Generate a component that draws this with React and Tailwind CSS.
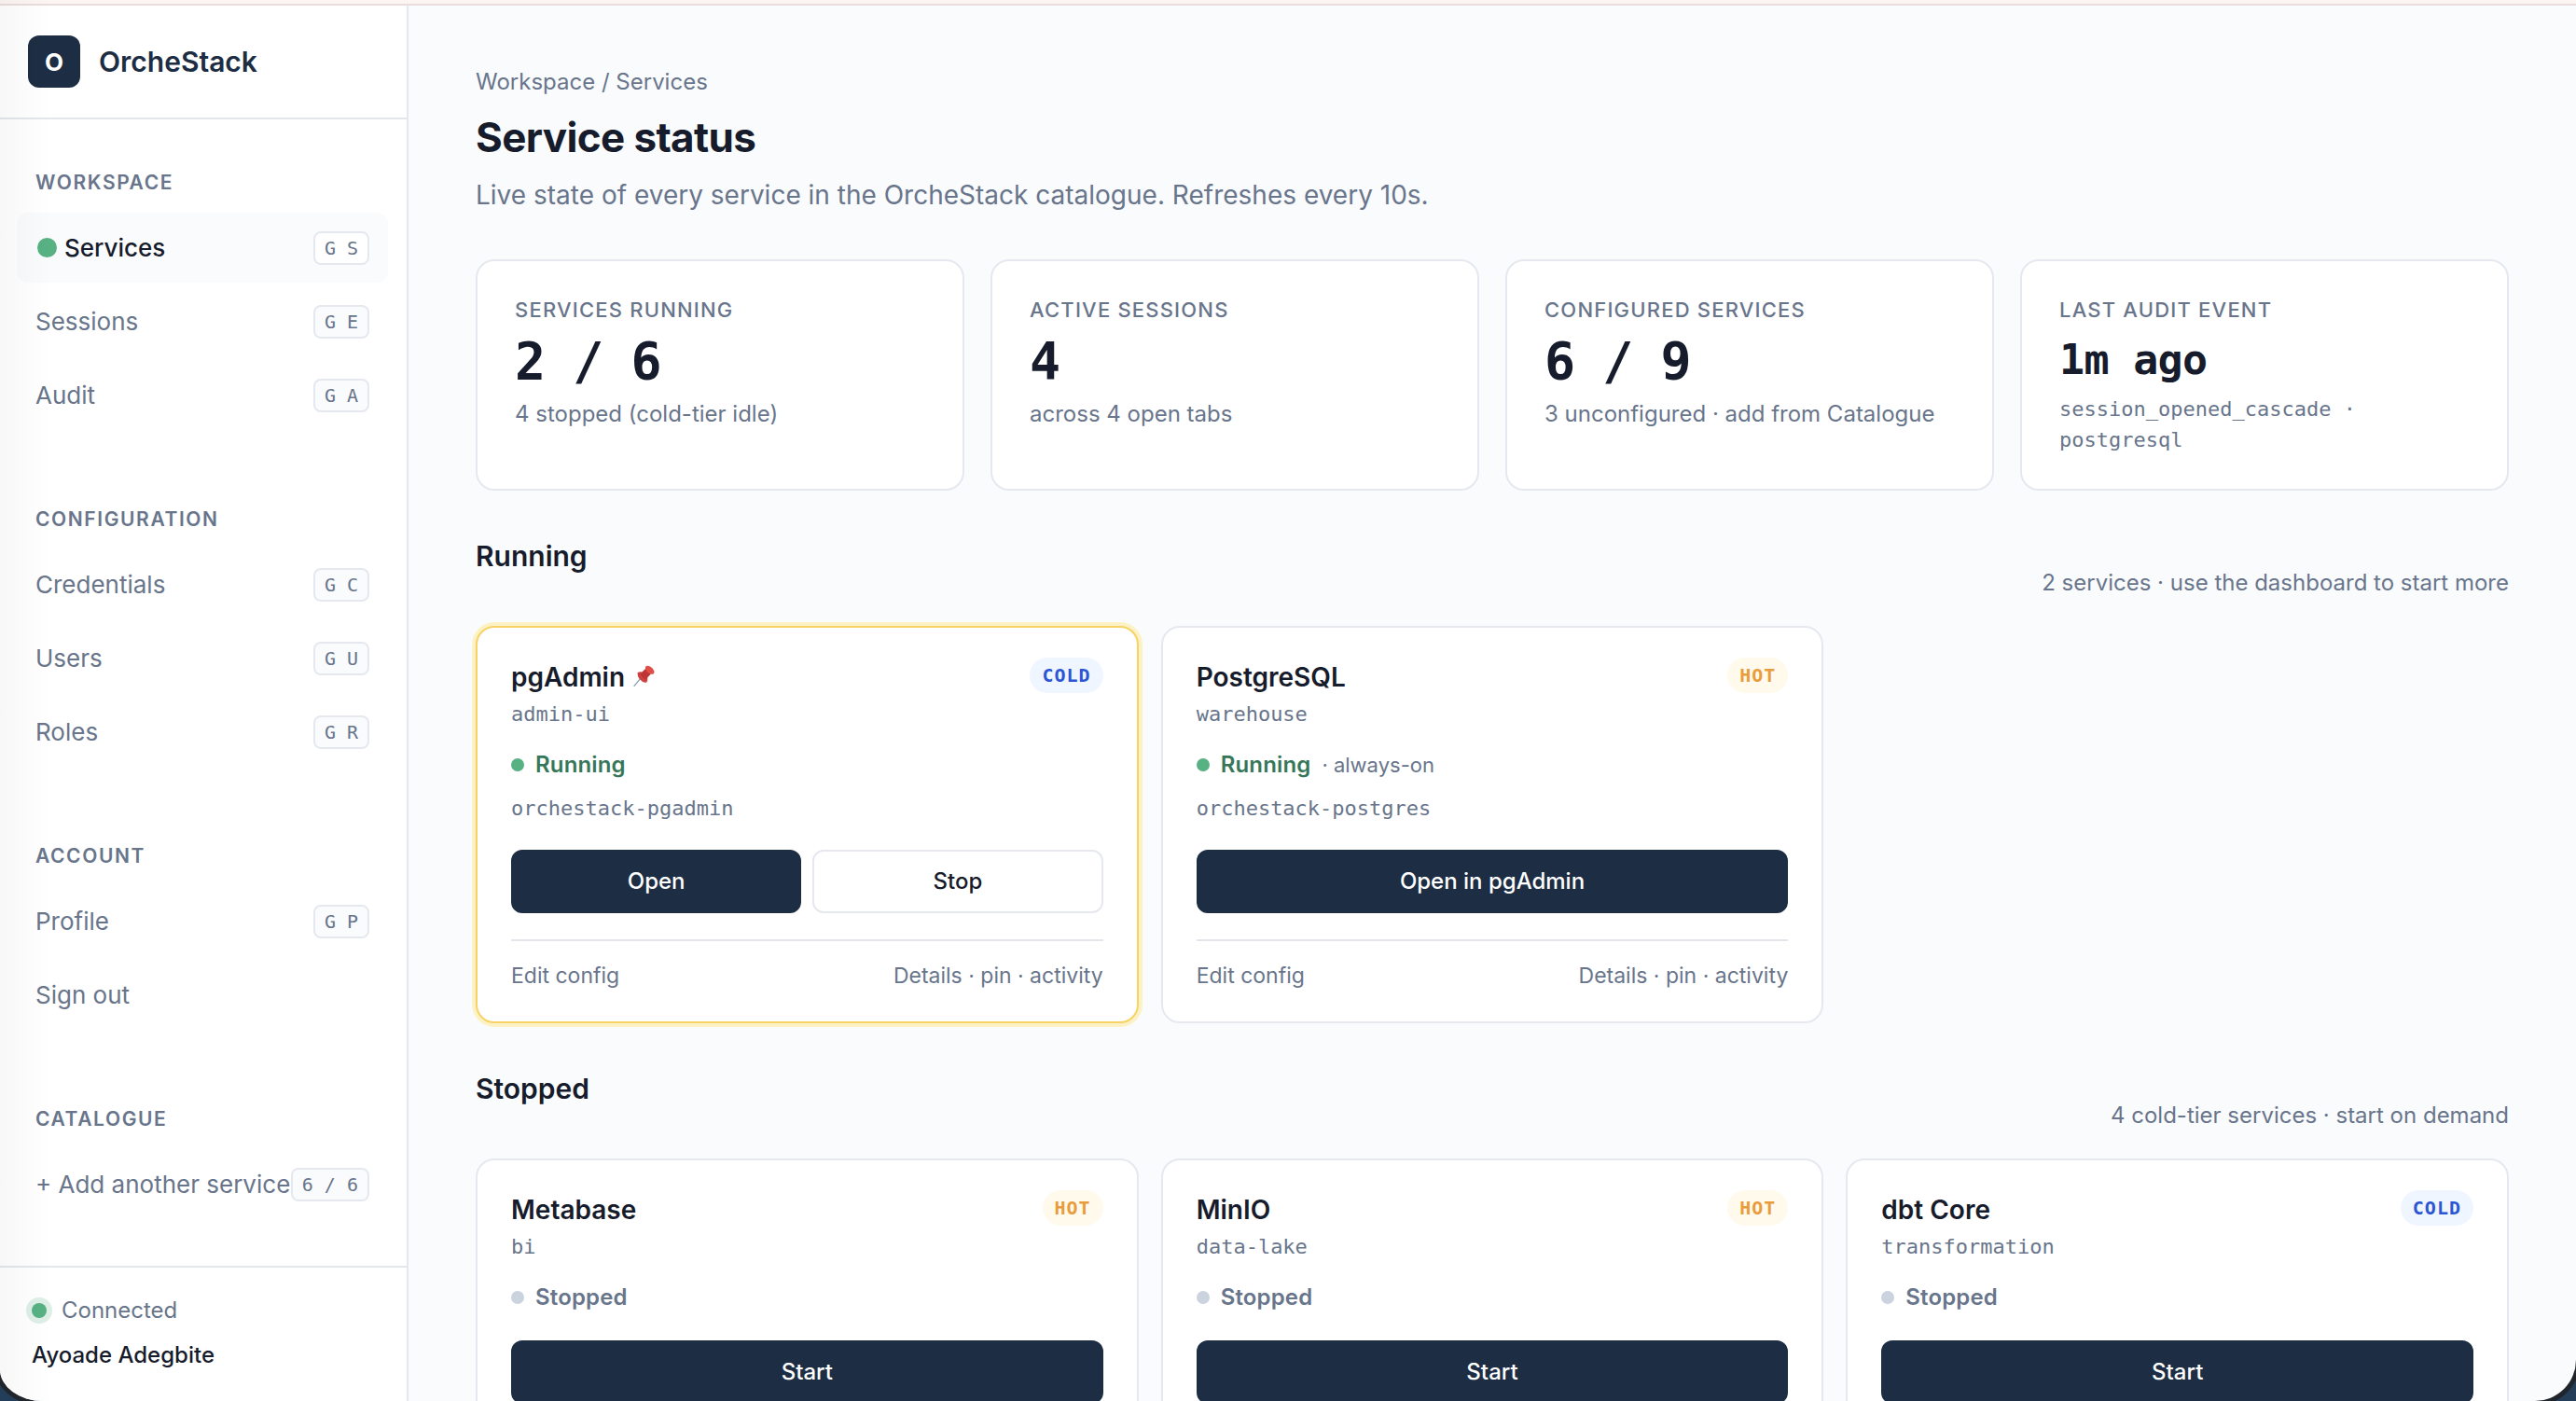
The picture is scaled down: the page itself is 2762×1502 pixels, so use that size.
const navGroups = [
  {
    title: "Workspace",
    items: [
      { label: "Services", kbd: "G S", active: true },
      { label: "Sessions", kbd: "G E" },
      { label: "Audit", kbd: "G A" },
    ],
  },
  {
    title: "Configuration",
    items: [
      { label: "Credentials", kbd: "G C" },
      { label: "Users", kbd: "G U" },
      { label: "Roles", kbd: "G R" },
    ],
  },
  {
    title: "Account",
    items: [{ label: "Profile", kbd: "G P" }, { label: "Sign out" }],
  },
  {
    title: "Catalogue",
    items: [{ label: "+ Add another service", kbd: "6 / 6" }],
  },
];

const stats = [
  { label: "Services running", value: "2 / 6", note: "4 stopped (cold-tier idle)" },
  { label: "Active sessions", value: "4", note: "across 4 open tabs" },
  { label: "Configured services", value: "6 / 9", note: "3 unconfigured · add from Catalogue" },
  { label: "Last audit event", value: "1m ago", note: "session_opened_cascade · postgresql", mono: true },
];

const running = [
  {
    name: "pgAdmin",
    kind: "admin-ui",
    tier: "COLD",
    pinned: true,
    running: true,
    container: "orchestack-pgadmin",
    actions: ["Open", "Stop"],
  },
  {
    name: "PostgreSQL",
    kind: "warehouse",
    tier: "HOT",
    running: true,
    hint: "· always-on",
    container: "orchestack-postgres",
    actions: ["Open in pgAdmin"],
  },
];

const stopped = [
  { name: "Metabase", kind: "bi", tier: "HOT", actions: ["Start"] },
  { name: "MinIO", kind: "data-lake", tier: "HOT", actions: ["Start"] },
  { name: "dbt Core", kind: "transformation", tier: "COLD", actions: ["Start"] },
];

const mono = "font-['DejaVu_Sans_Mono','Liberation_Mono',monospace]";

function Pin() {
  return (
    <svg viewBox="0 0 74 70" className="ml-2 h-[23px] w-[25px] -translate-y-[2px]">
      <path d="M27 42 5 68" stroke="#8b9cb0" strokeWidth="4" strokeLinecap="round" />
      <path d="M16 25c8-6 20-2 27 6s8 18 2 26c-8 1-14-3-20-9s-10-14-9-23z" fill="#cf413f" />
      <path d="M25 28 45 9l17 17-19 21c-9-3-15-10-18-19z" fill="#bd3534" />
      <path d="M42 5c6-6 15-2 21 4s10 14 5 20c-8 2-15-1-20-6s-8-11-6-18z" fill="#e04e4a" />
    </svg>
  );
}

function NavItem({ label, kbd, active }) {
  return (
    <a
      className={`flex h-[75px] items-center justify-between rounded-xl pl-5 pr-5 text-[26px] whitespace-nowrap ${
        active ? "bg-[#fafbfd] font-medium text-[#171c2c]" : "text-[#68758b]"
      }`}
    >
      <span className="flex items-center">
        {active && <span className="ml-[2px] mr-2 size-[21px] rounded-full bg-[#57b183]" />}
        {label}
      </span>
      {kbd && (
        <kbd
          className={`${mono} flex h-9 shrink-0 items-center rounded-lg border-2 border-[#e5e8ef] px-[10px] text-[20px] whitespace-pre text-[#68758b] ${
            active ? "bg-white" : "bg-[#fafbfd]"
          }`}
        >
          {kbd}
        </kbd>
      )}
    </a>
  );
}

function Sidebar() {
  return (
    <aside className="flex w-[438px] shrink-0 flex-col border-r-2 border-[#e5e8ef] bg-white">
      <div className="flex h-[122px] shrink-0 items-center gap-5 border-b-2 border-[#e3e7ec] pl-[30px]">
        <div className="flex size-14 items-center justify-center rounded-xl bg-[#1d2d43] text-[26px] font-bold text-white">
          O
        </div>
        <span className="text-[30px] font-semibold text-[#1d2d43]">OrcheStack</span>
      </div>

      <nav className="flex flex-1 flex-col gap-[79px] pt-[51px] pr-[20px] pl-[18px]">
        {navGroups.map((group) => (
          <div key={group.title} className="flex flex-col gap-1">
            <h2 className="mb-[11px] pl-5 text-[21px] leading-[34px] font-semibold tracking-[1.6px] text-[#68758b] uppercase">
              {group.title}
            </h2>
            {group.items.map((item) => (
              <NavItem key={item.label} {...item} />
            ))}
          </div>
        ))}
      </nav>

      <div className="flex h-[145px] shrink-0 flex-col border-t-2 border-[#e3e7ec] pt-[28px] pl-[34px] text-[24px] leading-9">
        <div className="flex items-center text-[#68758b]">
          <span className="mr-4 size-4 rounded-full bg-[#57b183] ring-[6px] ring-[#57b183]/20" />
          Connected
        </div>
        <div className="mt-3 font-medium text-[#171c2c]">Ayoade Adegbite</div>
      </div>
    </aside>
  );
}

function StatCard({ label, value, note, mono: isMono }) {
  return (
    <div className="h-[248px] rounded-[20px] border-2 border-[#e5e8ef] bg-white px-10 pt-[36px] text-[#68758b]">
      <div className="text-[22px] leading-8 font-medium tracking-[1.2px] uppercase">{label}</div>
      <div
        className={`${mono} flex h-[74px] items-center font-bold whitespace-pre text-[#171c2c] ${
          isMono ? "pt-[2px] text-[45px] tracking-[-0.7px]" : "pt-[5px] text-[55px] tracking-[-2px]"
        }`}
      >
        {value}
      </div>
      {isMono ? (
        <div className={`${mono} text-[22px] leading-[33px]`}>{note}</div>
      ) : (
        <div className="pt-1 text-[24px] leading-9">{note}</div>
      )}
    </div>
  );
}

function TierBadge({ tier }) {
  return (
    <span
      className={`${mono} flex h-[38px] items-center rounded-full px-[13px] text-[20px] font-bold tracking-[1px] ${
        tier === "HOT" ? "bg-[#fffaeb] text-[#e99c3c]" : "bg-[#eff6ff] text-[#2b55d3]"
      }`}
    >
      {tier}
    </span>
  );
}

function ServiceCard({ name, kind, tier, pinned, running, hint, container, actions }) {
  return (
    <article
      className={`flex h-[426px] flex-col rounded-[20px] border-2 bg-white px-9 pt-8 ${
        pinned ? "border-[#f8d264] ring-4 ring-[#fdf1c6]" : "border-[#e5e8ef]"
      }`}
    >
      <div className="flex items-start justify-between">
        <h3 className="flex h-[42px] items-center text-[28px] font-semibold text-[#171c2c]">
          {name}
          {pinned && <Pin />}
        </h3>
        <TierBadge tier={tier} />
      </div>
      <div className={`${mono} mt-px text-[22px] leading-9 text-[#68758b]`}>{kind}</div>

      <div className="mt-[18px] flex h-9 items-center text-[24px] font-semibold">
        <span className={`mr-3 size-[14px] rounded-full ${running ? "bg-[#57b183]" : "bg-[#cbd3df]"}`} />
        <span className={running ? "tracking-[0.15px] text-[#377759]" : "tracking-[0.15px] text-[#68758b]"}>
          {running ? "Running" : "Stopped"}
        </span>
        {hint && <span className="ml-3 text-[22px] font-normal text-[#68758b]">{hint}</span>}
      </div>

      {container && <div className={`${mono} mt-3 h-[33px] text-[22px] leading-[34px] text-[#68758b]`}>{container}</div>}

      <div className="mt-7 flex gap-3">
        {actions.map((action) => (
          <button
            key={action}
            className={`h-[68px] flex-1 rounded-xl border-2 text-[24px] font-medium ${
              action === "Stop" ? "border-[#e5e8ef] bg-white text-[#171c2c]" : "border-[#1d2d43] bg-[#1d2d43] text-white"
            }`}
          >
            {action}
          </button>
        ))}
      </div>

      {running && (
        <div className="mt-7 flex justify-between border-t-2 border-[#e3e7ec] pt-[19px] text-[23px] leading-9 text-[#68758b]">
          <span>Edit config</span>
          <span>Details · pin · activity</span>
        </div>
      )}
    </article>
  );
}

function Section({ title, note, services }) {
  return (
    <section>
      <div className="flex h-[145px] items-start justify-between">
        <h2 className="pt-[50px] text-[30px] leading-10 font-semibold text-[#171c2c]">{title}</h2>
        <span className="pt-[81px] text-[24px] leading-9 text-[#68758b]">{note}</span>
      </div>
      <div className="grid grid-cols-3 gap-6">
        {services.map((service) => (
          <ServiceCard key={service.name} {...service} />
        ))}
      </div>
    </section>
  );
}

export default function App() {
  return (
    <div className="h-[1502px] w-[2762px] overflow-hidden bg-[#243d58] font-['Inter','Liberation_Sans',sans-serif]">
      <div className="relative flex h-full flex-col overflow-hidden rounded-br-[44px] rounded-bl-[46px_34px] bg-[#fafbfd] shadow-[0_0_0_5px_#20252b]">
        <div className="h-[6px] shrink-0 border-b-2 border-[#e9dedd] bg-[#fdf5f2]" />
        <div className="flex min-h-0 flex-1">
          <Sidebar />
          <main className="flex-1 overflow-hidden px-[72px] pt-[64px]">
            <div className="text-[24px] leading-9 text-[#68758b]">Workspace / Services</div>
            <h1 className="mt-[13px] text-[44px] leading-[56px] font-bold tracking-[-0.63px] text-[#171c2c]">
              Service status
            </h1>
            <p className="mt-[13px] text-[28px] leading-[42px] text-[#68758b]">
              Live state of every service in the OrcheStack catalogue. Refreshes every 10s.
            </p>
            <div className="mt-12 grid grid-cols-4 gap-7">
              {stats.map((stat) => (
                <StatCard key={stat.label} {...stat} />
              ))}
            </div>
            <Section title="Running" note="2 services · use the dashboard to start more" services={running} />
            <Section title="Stopped" note="4 cold-tier services · start on demand" services={stopped} />
          </main>
        </div>
        {/* soft edge shade on the window's left side */}
        <div className="pointer-events-none absolute inset-y-0 left-0 w-14 bg-linear-to-r from-black/3 to-transparent" />
      </div>
    </div>
  );
}
